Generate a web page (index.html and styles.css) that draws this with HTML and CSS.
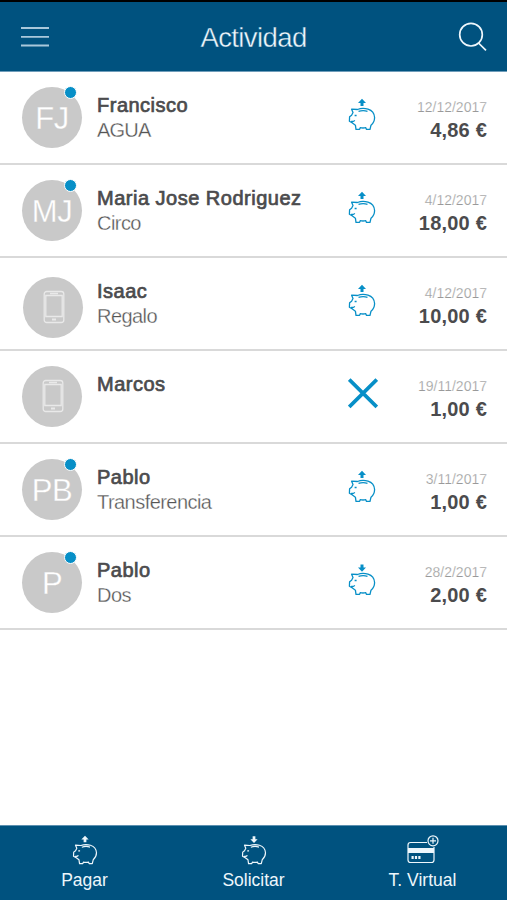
FILE: index.html
```html
<!DOCTYPE html>
<html lang="es">
<head>
<meta charset="utf-8">
<title>Actividad</title>
<link rel="stylesheet" href="styles.css">
</head>
<body>
<svg class="defs" aria-hidden="true">
  <symbol id="pig" viewBox="0 0 28 34">
    <path d="M9.5 11.5L3.6 11.2L5 14.5L3.6 17.2L1.6 18.8L1.4 23.2L4.4 25L7.4 27.2L8 31.4H11.6L12.2 29.7Q15 30.3 17.8 29.7L18.5 31.4H22L23 27.2Q26.6 24 26.6 19.5Q26.2 13.2 20 11.2Q14.5 9.6 9.5 11.5ZM10.5 13.4Q15 11.8 19.5 13.3M6.6 17.5H8.6M3 23.3Q5.5 24 6.8 22.4" fill="none" stroke="currentColor" stroke-width="1.3" stroke-linejoin="round"/>
  </symbol>
  <symbol id="up" viewBox="0 0 28 34"><path d="M14 .8L18 4.9H15.5V8H12.5V4.9H10Z" fill="currentColor"/></symbol>
  <symbol id="down" viewBox="0 0 28 34"><path d="M14 8.7L18 4.6H15.5V1.5H12.5V4.6H10Z" fill="currentColor"/></symbol>
  <symbol id="phone" viewBox="0 0 22 34">
    <g fill="none" stroke="currentColor" stroke-width="1.3"><rect x="1.2" y="1.5" width="19.6" height="31" rx="2.5"/><path d="M2.8 5.5H19.2V26.5H2.8ZM7 3.5H15"/><path d="M9 29.5H13" stroke-width="2"/></g>
  </symbol>
</svg>
<div class="app">
  <header class="top">
    <svg class="menu" viewBox="0 0 28 22"><path d="M0 1H28M0 9.8H28M0 18.5H28" stroke="#a9c8db" stroke-width="1.8"/></svg>
    <h1 class="title">Actividad</h1>
    <svg class="search" viewBox="0 0 30 30"><circle cx="13" cy="12.7" r="11.3"/><path d="M20.5 21L28 28.3"/></svg>
  </header>
  <main class="list">
    <article class="row">
      <div class="avatar">FJ<span class="dot"></span></div>
      <div class="who"><div class="name">Francisco</div><div class="note n-agua">AGUA</div></div>
      <svg class="kind"><use href="#pig"/><use href="#up"/></svg>
      <div class="sum"><div class="date">12/12/2017</div><div class="amount">4,86 €</div></div>
    </article>
    <article class="row">
      <div class="avatar">MJ<span class="dot"></span></div>
      <div class="who"><div class="name">Maria Jose Rodriguez</div><div class="note">Circo</div></div>
      <svg class="kind"><use href="#pig"/><use href="#up"/></svg>
      <div class="sum"><div class="date">4/12/2017</div><div class="amount">18,00 €</div></div>
    </article>
    <article class="row">
      <div class="avatar low"><svg class="phone"><use href="#phone"/></svg></div>
      <div class="who"><div class="name">Isaac</div><div class="note">Regalo</div></div>
      <svg class="kind"><use href="#pig"/><use href="#up"/></svg>
      <div class="sum"><div class="date">4/12/2017</div><div class="amount">10,00 €</div></div>
    </article>
    <article class="row">
      <div class="avatar"><svg class="phone"><use href="#phone"/></svg></div>
      <div class="who"><div class="name">Marcos</div></div>
      <svg class="kind cross" viewBox="0 0 30 32"><path d="M1.2 1.5L28.8 29M28.8 1.5L1.2 29"/></svg>
      <div class="sum"><div class="date">19/11/2017</div><div class="amount">1,00 €</div></div>
    </article>
    <article class="row">
      <div class="avatar">PB<span class="dot"></span></div>
      <div class="who"><div class="name">Pablo</div><div class="note">Transferencia</div></div>
      <svg class="kind"><use href="#pig"/><use href="#up"/></svg>
      <div class="sum"><div class="date">3/11/2017</div><div class="amount">1,00 €</div></div>
    </article>
    <article class="row">
      <div class="avatar">P<span class="dot"></span></div>
      <div class="who"><div class="name">Pablo</div><div class="note">Dos</div></div>
      <svg class="kind"><use href="#pig"/><use href="#down"/></svg>
      <div class="sum"><div class="date">28/2/2017</div><div class="amount">2,00 €</div></div>
    </article>
  </main>
  <nav class="tabs">
    <div class="tab"><svg class="tabicon"><use href="#pig"/><use href="#up"/></svg><span>Pagar</span></div>
    <div class="tab"><svg class="tabicon"><use href="#pig"/><use href="#down"/></svg><span>Solicitar</span></div>
    <div class="tab"><svg class="card" viewBox="0 0 32 30">
      <g fill="none" stroke="currentColor" stroke-width="1.2"><path d="M20 7.5H3.5Q1 7.5 1 10V25Q1 27.5 3.5 27.5H24.5Q27 27.5 27 25V12"/><circle cx="26" cy="5.8" r="5"/><path d="M26 2.8V8.8M23 5.8H29"/></g>
      <path d="M1 13H27V18H1Z" fill="currentColor"/><path d="M4.5 22.5H13.5" stroke="currentColor" stroke-width="3" stroke-dasharray="2.2 1.2"/>
    </svg><span>T. Virtual</span></div>
  </nav>
</div>
</body>
</html>
```

FILE: styles.css
```css
* { box-sizing: border-box; }
body { margin: 0; background: #fff; font-family: "Liberation Sans", Arial, sans-serif; }
.defs { position: absolute; width: 0; height: 0; }
.app { display: flex; flex-direction: column; height: 900px; }
.top {
  display: flex; align-items: center; justify-content: space-between;
  height: 72px; padding: 0 19px 0 21px; color: #eef7fc;
  background: #00527f; border-top: 2px solid #000; border-bottom: 1px solid #6f9dba;
}
.menu { width: 28px; height: 22px; margin-top: 3px; }
.title {
  margin: 3px 0 0; font-size: 27.5px; font-weight: 400; letter-spacing: -0.6px; line-height: 32px;
  -webkit-text-stroke: 0.4px #00527f;
}
.search { width: 30px; height: 30px; fill: none; stroke: currentColor; stroke-width: 1.7; }
.list { flex: 1; }
.row {
  display: grid; grid-template-columns: 60px 236px 44px 1fr; column-gap: 15px;
  height: 93px; padding: 15px 20px 0 22px; border-bottom: 2px solid #d9d9d9;
}
.avatar {
  position: relative; display: flex; align-items: center; justify-content: center;
  width: 60px; height: 61px; border-radius: 50%; background: #c9c9c9; color: #fff;
  font-size: 31px; letter-spacing: -0.5px; -webkit-text-stroke: 0.3px #c9c9c9; padding-top: 2px;
}
.low { margin: 4px 0 0 1px; }
.dot {
  position: absolute; left: 42px; top: -1px; width: 13px; height: 13px;
  border: 1px solid #fff; border-radius: 50%; background: #078fc7;
}
.phone { width: 22px; height: 34px; margin: -3px 0 0 1px; color: #e9e9e9; }
.low .phone { margin-top: -4px; }
.who { padding-top: 6px; }
.name {
  font-size: 20px; line-height: 25px; letter-spacing: 0.5px; color: #4b4b4d;
  -webkit-text-stroke: 0.7px #4b4b4d; white-space: nowrap;
}
.note { font-size: 20px; line-height: 25px; letter-spacing: -0.55px; color: #555; -webkit-text-stroke: 0.3px #fff; }
.n-agua { letter-spacing: -0.8px; }
.kind { width: 28px; height: 34px; margin-top: 11px; color: #078fc7; }
.cross { width: 30px; height: 32px; margin-top: 12px; fill: none; stroke: currentColor; stroke-width: 3.8; }
.sum { padding-top: 10px; text-align: right; white-space: nowrap; }
.date { font-size: 14px; line-height: 20px; color: #999; letter-spacing: 0; -webkit-text-stroke: 0.25px #fff; }
.amount { font-size: 20px; line-height: 26px; font-weight: 700; letter-spacing: 0.2px; color: #4b4b4d; }
.tabs {
  display: grid; grid-template-columns: repeat(3, 1fr); height: 75px;
  background: #00527f; color: #fff; border-top: 1px solid #5d90b0;
}
.tab { display: flex; flex-direction: column; align-items: center; padding-top: 9px; font-size: 17.5px; line-height: 22px; color: #eef7fc; }
.tabicon { width: 26px; height: 31px; margin-bottom: 3px; }
.card { width: 32px; height: 30px; margin-bottom: 4px; }
```
